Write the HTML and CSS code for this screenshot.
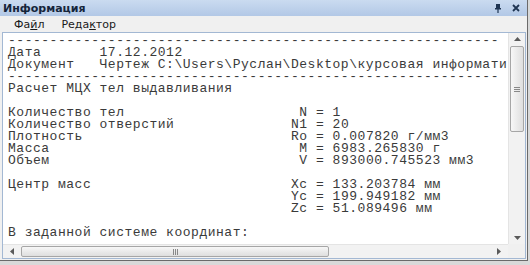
FILE: index.html
```html
<!DOCTYPE html>
<html lang="ru">
<head>
    <meta charset="UTF-8">
    <title>Информация</title>
    <link rel="stylesheet" href="styles.css">
</head>
<body>
    <div class="window">
        <!-- title bar -->
        <div class="titlebar">
            <span class="title">Информация</span>
            <span class="tools">
                <svg width="8" height="9" viewBox="0 0 8 9"><path d="M2 0h4v4H2z M1 4h6v1.5H1z M3.4 5.5h1.2V9H3.4z" fill="#1f3553"/></svg>
                <svg width="8" height="8" viewBox="0 0 8 8"><path d="M1 1L7 7M7 1L1 7" stroke="#1f3553" stroke-width="1.8"/></svg>
            </span>
        </div>

        <!-- menu -->
        <div class="menubar">
            <span>Фа<u>й</u>л</span>
            <span>Реда<u>к</u>тор</span>
        </div>

        <!-- report view -->
        <div class="doc">
            <div class="view">
                <div class="text">
                    <div class="line">-----------------------------------------------------------</div>
                    <div class="line">Дата       17.12.2012</div>
                    <div class="line">Документ   Чертеж C:\Users\Руслан\Desktop\курсовая информати</div>
                    <div class="line">-----------------------------------------------------------</div>
                    <div class="line">Расчет МЦХ тел выдавливания</div>
                    <div class="line"></div>
                    <div class="row"><span>Количество тел</span><span> N = 1</span></div>
                    <div class="row"><span>Количество отверстий</span><span>N1 = 20</span></div>
                    <div class="row"><span>Плотность</span><span>Ro = 0.007820 г/мм3</span></div>
                    <div class="row"><span>Масса</span><span> M = 6983.265830 г</span></div>
                    <div class="row"><span>Объем</span><span> V = 893000.745523 мм3</span></div>
                    <div class="line"></div>
                    <div class="row"><span>Центр масс</span><span>Xc = 133.203784 мм</span></div>
                    <div class="row"><span></span><span>Yc = 199.949182 мм</span></div>
                    <div class="row"><span></span><span>Zc = 51.089496 мм</span></div>
                    <div class="line"></div>
                    <div class="line">В заданной системе координат:</div>
                </div>
                <div class="vscroll">
                    <div class="arrow"><svg width="7" height="4" viewBox="0 0 7 4"><path d="M0 4L3.5 0L7 4z" fill="#5a5a5a"/></svg></div>
                    <div class="vthumb"><span class="grip-v"></span></div>
                    <div class="vtrack"></div>
                    <div class="arrow"><svg width="7" height="4" viewBox="0 0 7 4"><path d="M0 0L3.5 4L7 0z" fill="#5a5a5a"/></svg></div>
                </div>
            </div>
            <div class="hbar">
                <div class="hscroll">
                    <div class="harrow"><svg width="4" height="7" viewBox="0 0 4 7"><path d="M4 0L0 3.5L4 7z" fill="#5a5a5a"/></svg></div>
                    <div class="hthumb"><span class="grip-h"></span></div>
                    <div class="htrack"></div>
                    <div class="harrow"><svg width="4" height="7" viewBox="0 0 4 7"><path d="M0 0L4 3.5L0 7z" fill="#5a5a5a"/></svg></div>
                </div>
                <div class="corner"></div>
            </div>
        </div>
    </div>
</body>
</html>
```

FILE: styles.css
```css
body {
    margin: 0;
    background: #d9d9d9;
    font-family: "DejaVu Sans", Tahoma, sans-serif;
}
.window {
    width: 527px;
    height: 260px;
    display: flex;
    flex-direction: column;
    background: #f0f0f0;
    border-right: 1px solid #6a6a6a;
    border-bottom: 1px solid #6a6a6a;
}
.titlebar {
    height: 16px;
    flex: none;
    display: flex;
    align-items: center;
    justify-content: space-between;
    padding: 0 7px 0 3px;
    background: linear-gradient(#cadbf0, #b2c8e6);
}
.title {
    font-size: 11px;
    font-weight: bold;
    color: #15253b;
}
.tools {
    display: flex;
    align-items: center;
    gap: 10px;
}
.menubar {
    height: 16px;
    flex: none;
    display: flex;
    align-items: center;
    gap: 17px;
    padding-left: 14px;
    font-size: 11px;
    color: #1a1a1a;
}
.doc {
    flex: 1;
    min-height: 0;
    margin: 0 1px 1px 2px;
    display: flex;
    flex-direction: column;
    background: #fff;
    border: 1px solid #a3b8d3;
}
.view {
    flex: 1;
    min-height: 0;
    display: flex;
}
.text {
    flex: 1;
    min-width: 0;
    padding: 2px 0 0 5px;
    overflow: hidden;
    font: 13px/12px "Liberation Mono", monospace;
    letter-spacing: 0.52px;
    color: #3a3a3a;
}
.line,
.row {
    height: 12px;
    white-space: pre;
}
.row {
    display: grid;
    grid-template-columns: 283px auto;
}
.vscroll {
    width: 16px;
    flex: none;
    display: flex;
    flex-direction: column;
    background: #f2f2f2;
    border-left: 1px solid #e4e4e4;
}
.arrow {
    height: 12px;
    display: flex;
    align-items: center;
    justify-content: center;
}
.vthumb {
    height: 84px;
    margin: 1px 1px 0;
    display: flex;
    align-items: center;
    justify-content: center;
    border: 1px solid #a6a6a6;
    border-radius: 2px;
    background: linear-gradient(to right, #f7f7f7, #dedede);
}
.grip-v {
    width: 6px;
    height: 5px;
    box-sizing: border-box;
    border-top: 1px solid #888;
    border-bottom: 1px solid #888;
    background: linear-gradient(transparent 1px, #888 1px, #888 2px, transparent 2px);
}
.vtrack {
    flex: 1;
}
.hbar {
    height: 14px;
    flex: none;
    display: flex;
}
.hscroll {
    flex: 1;
    display: flex;
    background: #f2f2f2;
    border-top: 1px solid #e4e4e4;
}
.harrow {
    width: 18px;
    display: flex;
    align-items: center;
    justify-content: center;
}
.hthumb {
    width: 306px;
    margin: 1px 0;
    display: flex;
    align-items: center;
    justify-content: center;
    border: 1px solid #a6a6a6;
    border-radius: 2px;
    background: linear-gradient(#f7f7f7, #dedede);
}
.grip-h {
    width: 5px;
    height: 6px;
    box-sizing: border-box;
    border-left: 1px solid #888;
    border-right: 1px solid #888;
    background: linear-gradient(to right, transparent 1px, #888 1px, #888 2px, transparent 2px);
}
.htrack {
    flex: 1;
}
.corner {
    width: 17px;
    background: #f0f0f0;
}
```
